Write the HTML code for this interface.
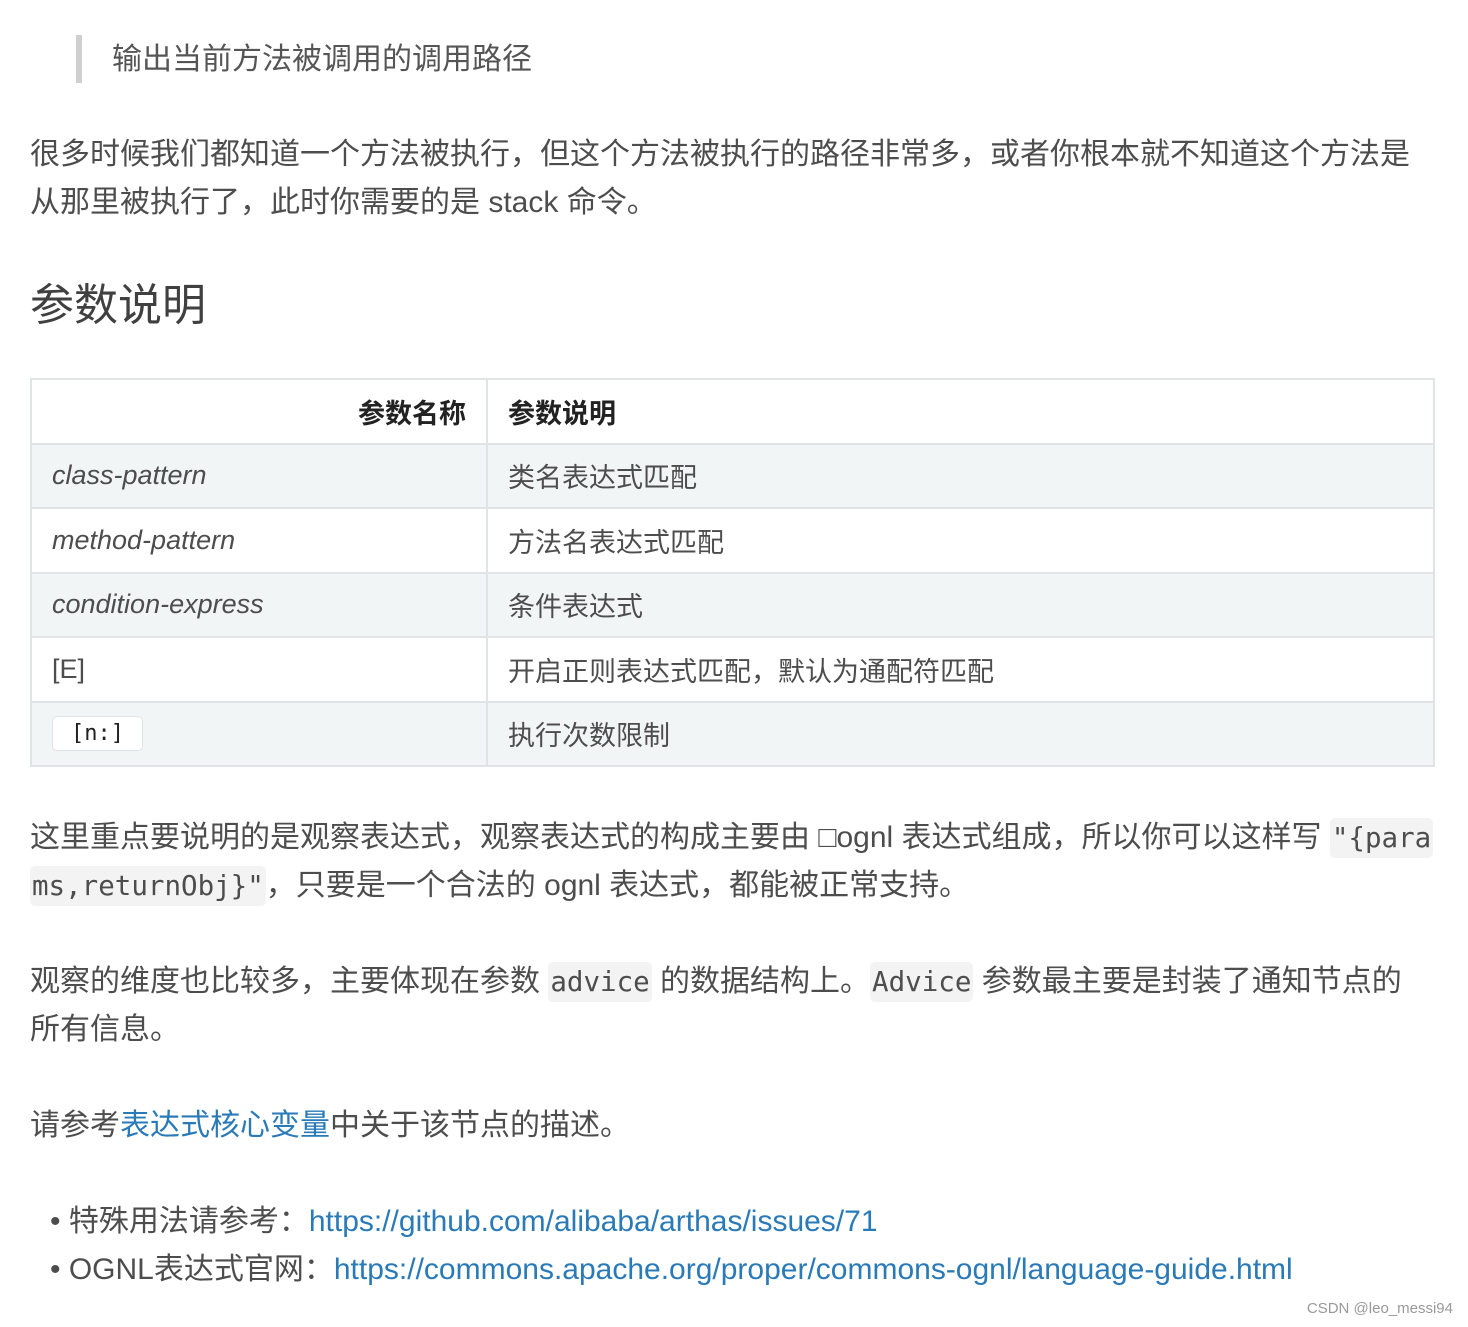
<!DOCTYPE html>
<html><head><meta charset="utf-8"><style>
*{margin:0;padding:0;box-sizing:border-box}
body{width:1468px;height:1327px;background:#fff;position:relative;overflow:hidden;font-family:"Liberation Sans","Noto Sans CJK SC",sans-serif;color:#4d4d4d;font-size:30px}
.l{position:absolute;left:30px;white-space:nowrap;line-height:48px;height:48px}
code{font-family:"DejaVu Sans Mono",monospace;font-size:27.5px;background:#f3f3f3;border-radius:5px;padding:4px 2px;color:#4d4d4d}
a{color:#2a7ab8;text-decoration:none}
table{position:absolute;left:30px;top:378px;width:1405px;border-collapse:collapse;font-size:27px}
td,th{border:2px solid #e1e4e6;height:64.5px;padding:0 20px;color:#4d4d4d}
th{color:#222;font-weight:bold}
tr:nth-child(even) td{background:#f2f5f6}
</style></head><body>
<div style="position:absolute;left:76px;top:35px;width:6px;height:48px;background:#cfcfcf"></div>
<div class="l" style="left:112px;top:36px;color:#555">输出当前方法被调用的调用路径</div>
<div class="l" style="top:131px">很多时候我们都知道一个方法被执行，但这个方法被执行的路径非常多，或者你根本就不知道这个方法是</div>
<div class="l" style="top:179px">从那里被执行了，此时你需要的是 stack 命令。</div>
<div class="l" style="top:278px;font-size:44px;line-height:56px;height:56px;color:#404040">参数说明</div>
<table>
<tr><th style="text-align:right;width:456px">参数名称</th><th style="text-align:left">参数说明</th></tr>
<tr><td><i>class-pattern</i></td><td>类名表达式匹配</td></tr>
<tr><td><i>method-pattern</i></td><td>方法名表达式匹配</td></tr>
<tr><td><i>condition-express</i></td><td>条件表达式</td></tr>
<tr><td>[E]</td><td>开启正则表达式匹配，默认为通配符匹配</td></tr>
<tr><td><span style="display:inline-block;background:#fff;border:1px solid #e1e4e6;border-radius:5px;padding:4px 18px;font-family:'DejaVu Sans Mono',monospace;font-size:22px;color:#222">[n:]</span></td><td>执行次数限制</td></tr>
</table>
<div class="l" style="top:814px">这里重点要说明的是观察表达式，观察表达式的构成主要由 □ognl 表达式组成，所以你可以这样写 <code>"{para</code></div>
<div class="l" style="top:862px"><code>ms,returnObj}"</code>，只要是一个合法的 ognl 表达式，都能被正常支持。</div>
<div class="l" style="top:958px">观察的维度也比较多，主要体现在参数 <code>advice</code> 的数据结构上。<code>Advice</code> 参数最主要是封装了通知节点的</div>
<div class="l" style="top:1006px">所有信息。</div>
<div class="l" style="top:1102px">请参考<a>表达式核心变量</a>中关于该节点的描述。</div>
<div class="l" style="left:50px;top:1198px">•&nbsp;特殊用法请参考：<a>https://github.com/alibaba/arthas/issues/71</a></div>
<div class="l" style="left:50px;top:1246px">•&nbsp;OGNL表达式官网：<a>https://commons.apache.org/proper/commons-ognl/language-guide.html</a></div>
<div style="position:absolute;right:15px;top:1300px;font-size:15px;color:#999">CSDN @leo_messi94</div>
</body></html>
